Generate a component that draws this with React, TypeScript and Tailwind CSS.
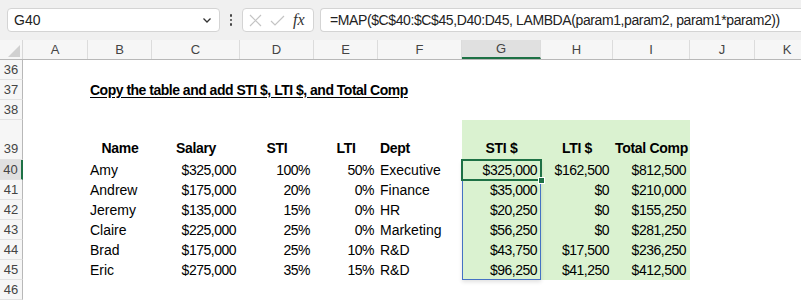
import React from "react";

const cols = ["A", "B", "C", "D", "E", "F", "G", "H", "I", "J", "K"];
const widths = ["w-[65px]", "w-[64px]", "w-[88px]", "w-[74px]", "w-[64px]", "w-[84px]", "w-[79px]", "w-[72px]", "w-[77px]", "w-[65px]", "w-[65px]"];

type Row = { n: number; tall?: boolean; cells?: (string | null)[]; head?: boolean; title?: boolean };

const data: Row[] = [
  { n: 36 },
  { n: 37, title: true },
  { n: 38 },
  { n: 39, tall: true, head: true, cells: ["", "Name", "Salary", "STI", "LTI", "Dept", "STI $", "LTI $", "Total Comp"] },
  { n: 40, cells: ["", "Amy", "$325,000", "100%", "50%", "Executive", "$325,000", "$162,500", "$812,500"] },
  { n: 41, cells: ["", "Andrew", "$175,000", "20%", "0%", "Finance", "$35,000", "$0", "$210,000"] },
  { n: 42, cells: ["", "Jeremy", "$135,000", "15%", "0%", "HR", "$20,250", "$0", "$155,250"] },
  { n: 43, cells: ["", "Claire", "$225,000", "25%", "0%", "Marketing", "$56,250", "$0", "$281,250"] },
  { n: 44, cells: ["", "Brad", "$175,000", "25%", "10%", "R&D", "$43,750", "$17,500", "$236,250"] },
  { n: 45, cells: ["", "Eric", "$275,000", "35%", "15%", "R&D", "$96,250", "$41,250", "$412,500"] },
  { n: 46 },
];

const FormulaBar = () => (
  <div className="h-[40px] bg-[#f0f0f0] flex items-center pl-[7px] gap-0">
    <div className="w-[213px] h-[24px] bg-white border border-[#d4d4d4] rounded-[4px] flex items-center justify-between pl-[6px] pr-[6px] text-[14px] text-[#222]">
      <span>G40</span>
      <svg width="12" height="12" viewBox="0 0 12 12" fill="none" stroke="#333" strokeWidth="1.3">
        <path d="M2.5 4.5 L6 8 L9.5 4.5" />
      </svg>
    </div>
    <div className="w-[22px] flex flex-col items-center gap-[2px]">
      <span className="w-[2.5px] h-[2.5px] bg-[#444] rounded-full" />
      <span className="w-[2.5px] h-[2.5px] bg-[#444] rounded-full" />
      <span className="w-[2.5px] h-[2.5px] bg-[#444] rounded-full" />
    </div>
    <div className="w-[72px] h-[24px] bg-white border border-[#d4d4d4] rounded-[4px] flex items-center pl-[6px] gap-[8px]">
      <svg width="13" height="13" viewBox="0 0 13 13" stroke="#c4c4c4" strokeWidth="1.2">
        <path d="M1 1 L12 12 M12 1 L1 12" />
      </svg>
      <svg width="15" height="13" viewBox="0 0 15 13" fill="none" stroke="#c4c4c4" strokeWidth="1.2">
        <path d="M1 7 L5 11 L14 2" />
      </svg>
      <span className="text-[16px] italic text-[#333] font-['Liberation_Serif',serif] leading-none">fx</span>
    </div>
    <div className="ml-[6px] flex-1 h-[24px] bg-white border border-r-0 border-[#d4d4d4] rounded-l-[4px] flex items-center pl-[9px] text-[14px] tracking-[-0.4px] text-[#222] whitespace-nowrap overflow-hidden">
      =MAP($C$40:$C$45,D40:D45, LAMBDA(param1,param2, param1*param2))
    </div>
  </div>
);

const Header = () => (
  <div className="flex h-[20px] bg-[#f6f6f6] border-b border-[#b8b8b8]">
    <div className="w-[23px] shrink-0 border-r border-[#d8d8d8] relative">
      <svg className="absolute right-[2px] bottom-[2px]" width="12" height="12" viewBox="0 0 12 12">
        <path d="M12 0 L12 12 L0 12 Z" fill="#d0d0d0" />
      </svg>
    </div>
    {cols.map((c, i) => (
      <div
        key={c}
        className={`${widths[i]} shrink-0 flex items-center justify-center text-[13px] text-[#444] border-r border-[#dcdcdc] ${
          c === "G" ? "bg-[#e0e0e0] border-b-2 border-b-[#1e7145]" : ""
        }`}
      >
        {c}
      </div>
    ))}
    <div className="flex-1" />
  </div>
);

const align = (i: number, head: boolean) => {
  if (head) return i === 5 ? "justify-start pl-[2px]" : "justify-center";
  if (i === 1 || i === 5) return "justify-start pl-[2px]";
  return "justify-end pr-[4px]";
};

const SheetRow = ({ r }: { r: Row }) => (
  <div className={`flex ${r.tall ? "h-[40px]" : "h-[20px]"}`}>
    <div
      className={`w-[23px] shrink-0 flex items-center justify-center text-[13px] text-[#444] border-b border-[#e2e2e2] ${
        r.n === 40
          ? "bg-[#e0e0e0] border-r-2 border-r-[#1e7145] text-[#1e7145]"
          : "bg-[#f6f6f6] border-r border-r-[#b8b8b8]"
      } ${r.tall ? "items-end pb-[1px]" : ""}`}
    >
      {r.n}
    </div>
    {r.title ? (
      <div className="flex items-center pl-[67px] text-[14px] font-bold underline underline-offset-2 text-black whitespace-nowrap tracking-[-0.5px]">
        Copy the table and add STI $, LTI $, and Total Comp
      </div>
    ) : (
      cols.map((c, i) => {
        const v = r.cells ? r.cells[i] : null;
        const green = r.cells && i >= 6 && i <= 8;
        const num = !!v && (v.startsWith("$") || v.endsWith("%"));
        return (
          <div
            key={c}
            className={`${widths[i]} shrink-0 flex ${r.tall ? "items-end pb-[1px]" : "items-center"} ${align(i, !!r.head)} text-[14px] text-black whitespace-nowrap ${
              r.head ? "font-bold tracking-[-0.3px]" : num ? "tracking-[-0.5px]" : ""
            } ${green ? "bg-[#daf2d0]" : ""}`}
          >
            {v}
          </div>
        );
      })
    )}
  </div>
);

export default function App() {
  return (
    <div className="w-[801px] h-[301px] overflow-hidden bg-white font-['Liberation_Sans',Arial,sans-serif] text-black">
      <FormulaBar />
      <Header />
      <div className="relative">
        {data.map((r) => (
          <SheetRow key={r.n} r={r} />
        ))}
        <div className="absolute left-[462px] top-[100px] w-[79px] h-[120px] border border-[#4472c4] shadow-[0_2px_4px_rgba(0,0,0,0.12)] pointer-events-none" />
        <div className="absolute left-[461px] top-[99px] w-[81px] h-[22px] border-2 border-[#1e7145] pointer-events-none" />
        <div className="absolute left-[538px] top-[117px] w-[5px] h-[5px] bg-[#1e7145] border border-white box-content pointer-events-none" />
      </div>
    </div>
  );
}
